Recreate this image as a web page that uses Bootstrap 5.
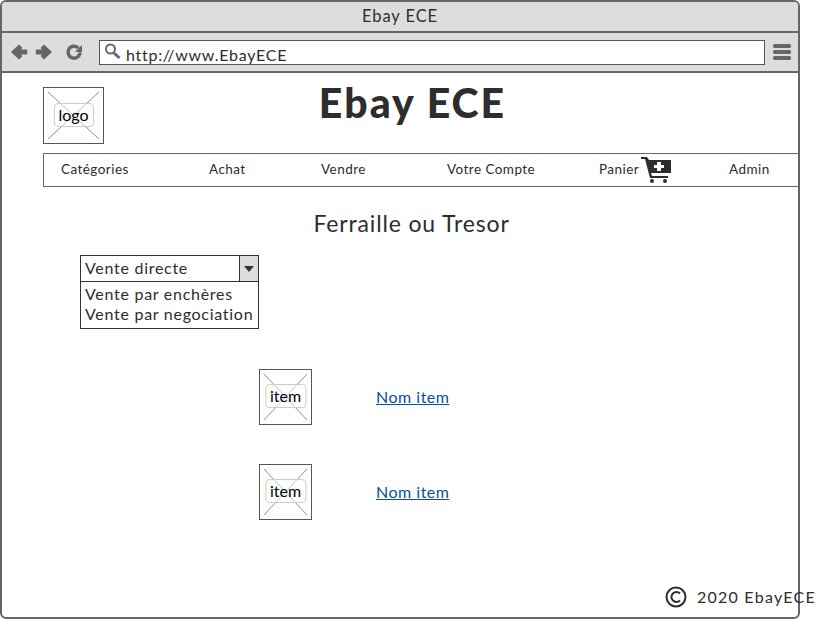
<!DOCTYPE html>
<html lang="fr">

<head>
  <meta charset="UTF-8">
  <title>Ebay ECE</title>
  <link href="https://cdn.jsdelivr.net/npm/bootstrap@5.3.3/dist/css/bootstrap.min.css" rel="stylesheet">
  <style>
    body {
      margin: 0;
      background: #fff;
      font-family: "Lato", "Liberation Sans", sans-serif;
      color: #2d2d2d;
      overflow: hidden;
    }

    .win-frame {
      width: 800px;
      height: 619px;
      border: 2px solid #666;
      border-radius: 6px;
      display: flex;
      flex-direction: column;
    }

    .win-title {
      height: 31px;
      background: #ddd;
      border-bottom: 2px solid #666;
      border-radius: 4px 4px 0 0;
      font-size: 16.5px;
      line-height: 29px;
      letter-spacing: .9px;
      flex: none;
    }

    .win-bar {
      height: 40px;
      background: #ddd;
      border-bottom: 2px solid #666;
      padding: 0 7px 0 9px;
      flex: none;
    }

    .url-box {
      width: 666px;
      height: 25px;
      margin-left: 16px;
      margin-right: 8px;
      background: #fff;
      border: 1px solid #555;
      padding-left: 4px;
      font-size: 16px;
      letter-spacing: .72px;
    }

    .url-text {
      margin-left: 5px;
      padding-top: 5px;
    }

    .page-head {
      height: 80px;
      padding: 14px 0 0 41px;
      flex: none;
    }

    .site-title {
      flex: 1;
      text-align: center;
      font-size: 41px;
      font-weight: 900;
      line-height: 1;
      letter-spacing: 2px;
      margin: -5px 0 0 0;
      padding-right: 77px;
    }

    .ph-box {
      border: 1px solid #555;
      position: relative;
      background: #fff;
      flex: none;
    }

    .ph-box svg {
      display: block;
      width: 100%;
      height: 100%;
    }

    .ph-label {
      position: absolute;
      left: 50%;
      top: 50%;
      transform: translate(-50%, -54%);
      background: rgba(255, 255, 255, .5);
      border: 1px solid #ccc;
      border-radius: 4px;
      padding: 0 4px;
      font-size: 16px;
      line-height: 22px;
      color: #000;
    }

    .ph-logo {
      width: 61px;
      height: 57px;
    }

    .ph-item {
      width: 53px;
      height: 56px;
    }

    .main-nav {
      display: grid;
      grid-template-columns: 148px 112px 126px 152px 130px 1fr;
      align-items: center;
      height: 34px;
      margin-left: 41px;
      margin-right: -1px;
      padding: 0 0 2px 17px;
      border: 1px solid #666;
      font-size: 13.5px;
      letter-spacing: .45px;
      flex: none;
    }

    .cart-ico {
      margin: 2px 0 0 2px;
    }

    .sub-title {
      font-size: 23px;
      line-height: 1;
      letter-spacing: .85px;
      text-align: center;
      margin: 25px 0 0 0;
      padding-left: 23px;
    }

    .combo-box {
      width: 179px;
      margin: 20px 0 0 78px;
      border: 1px solid #333;
      font-size: 16px;
      letter-spacing: .72px;
      line-height: 20px;
    }

    .combo-top {
      height: 26px;
      border-bottom: 1px solid #333;
    }

    .combo-text {
      padding: 2px 0 0 4px;
    }

    .combo-btn {
      width: 19px;
      background: #ddd;
      border-left: 1px solid #333;
    }

    .combo-list {
      padding: 2px 4px 4px 4px;
      white-space: nowrap;
    }

    .item-row {
      margin-left: 257px;
      height: 56px;
    }

    .item-gap-a {
      margin-top: 40px;
    }

    .item-gap-b {
      margin-top: 39px;
    }

    .item-name {
      margin-left: 64px;
      color: #0b4f9e;
      font-size: 16px;
      letter-spacing: .5px;
    }

    .foot-line {
      margin-top: auto;
      margin-right: -18px;
      height: 22px;
      margin-bottom: 9px;
      font-size: 16px;
      letter-spacing: 1.25px;
      white-space: nowrap;
    }

    .foot-ico {
      margin-right: 10px;
    }
  </style>
</head>

<body>

  <div class="win-frame">
    <!-- browser chrome -->
    <div class="win-title text-center">Ebay ECE</div>
    <div class="win-bar d-flex align-items-center">
      <svg width="72" height="18" viewBox="0 0 72 18">
        <path fill="#666" stroke="#666" stroke-width="1.500" stroke-linejoin="round" d="M1 9 8 2.500 10.500 5 8 7.200H15.500V10.800H8L10.500 13 8 15.500Z" />
        <path fill="#666" stroke="#666" stroke-width="1.500" stroke-linejoin="round" d="M40 9 33 2.500 30.500 5 33 7.200H25.500V10.800H33L30.500 13 33 15.500Z" />
        <path fill="none" stroke="#666" stroke-width="3.500" d="M67.500 5.200A6 6 0 1 0 69 9.500" />
        <path fill="#666" d="M71 2V9H64Z" />
      </svg>
      <div class="url-box d-flex align-items-center">
        <svg width="17" height="18" viewBox="0 0 17 18" fill="none" stroke="#666">
          <circle cx="6.500" cy="6" r="4.500" stroke-width="2" />
          <path d="M10 10 15.500 15" stroke-width="3" />
        </svg>
        <span class="url-text">http://www.EbayECE</span>
      </div>
      <svg width="18" height="16" viewBox="0 0 18 16" fill="#666">
        <rect y="0" width="18" height="4" rx="1.500" />
        <rect y="6" width="18" height="4" rx="1.500" />
        <rect y="12" width="18" height="4" rx="1.500" />
      </svg>
    </div>

    <!-- header -->
    <div class="page-head d-flex align-items-start">
      <div class="ph-box ph-logo">
        <svg viewBox="0 0 61 57" preserveAspectRatio="none" stroke="#888">
          <path d="M4 4 57 53M57 4 4 53" />
        </svg>
        <span class="ph-label">logo</span>
      </div>
      <h1 class="site-title">Ebay ECE</h1>
    </div>

    <nav class="main-nav">
      <span>Catégories</span>
      <span>Achat</span>
      <span>Vendre</span>
      <span>Votre Compte</span>
      <span class="d-flex align-items-center">Panier
        <svg class="cart-ico" width="30" height="26" viewBox="0 0 30 26" fill="#2d2d2d">
          <path d="M0 0H6L8 3H30V16H10L11 19H27V21H9L4 2H0Z" />
          <circle cx="11" cy="24" r="2" />
          <circle cx="24" cy="24" r="2" />
          <path fill="#fff" d="M16 5H20V8H23V11H20V14H16V11H13V8H16Z" />
        </svg>
      </span>
      <span>Admin</span>
    </nav>

    <h2 class="sub-title fw-normal">Ferraille ou Tresor</h2>

    <div class="combo-box">
      <div class="combo-top d-flex">
        <span class="combo-text flex-grow-1">Vente directe</span>
        <span class="combo-btn d-flex align-items-center justify-content-center">
          <svg width="10" height="6" viewBox="0 0 10 6" fill="#333"><path d="M0 0H10L5 6Z" /></svg>
        </span>
      </div>
      <div class="combo-list">
        <div>Vente par enchères</div>
        <div>Vente par negociation</div>
      </div>
    </div>

    <div class="item-row item-gap-a d-flex align-items-center">
      <div class="ph-box ph-item">
        <svg viewBox="0 0 53 56" preserveAspectRatio="none" stroke="#888">
          <path d="M4 4 49 52M49 4 4 52" />
        </svg>
        <span class="ph-label">item</span>
      </div>
      <a href="#" class="item-name">Nom item</a>
    </div>

    <div class="item-row item-gap-b d-flex align-items-center">
      <div class="ph-box ph-item">
        <svg viewBox="0 0 53 56" preserveAspectRatio="none" stroke="#888">
          <path d="M4 4 49 52M49 4 4 52" />
        </svg>
        <span class="ph-label">item</span>
      </div>
      <a href="#" class="item-name">Nom item</a>
    </div>

    <!-- footer -->
    <div class="foot-line d-flex justify-content-end align-items-center">
      <svg class="foot-ico" width="22" height="22" viewBox="0 0 22 22" fill="none" stroke="#2d2d2d" stroke-width="2">
        <circle cx="11" cy="11" r="9.500" />
        <path d="M15 7.500A5 5 0 1 0 15 14.500" />
      </svg>
      <span>2020 EbayECE</span>
    </div>
  </div>

  <script src="https://cdn.jsdelivr.net/npm/bootstrap@5.3.3/dist/js/bootstrap.bundle.min.js"></script>
</body>

</html>
